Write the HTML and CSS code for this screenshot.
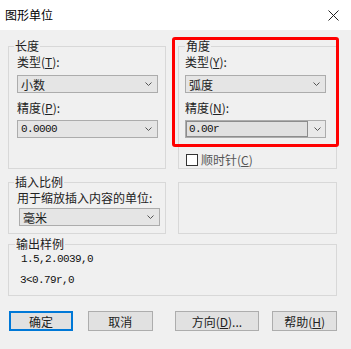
FILE: index.html
```html
<!DOCTYPE html>
<html lang="zh-CN">
<head>
    <meta charset="UTF-8">
    <title>图形单位</title>
    <link rel="stylesheet" href="styles.css">
</head>
<body>
    <div class="titlebar">
        <span class="title">图形单位</span>
        <svg class="close" width="11" height="11" viewBox="0 0 11 11">
            <path d="M0.5 0.5L10.5 10.5M10.5 0.5L0.5 10.5" stroke="#222" stroke-width="1" fill="none"/>
        </svg>
    </div>

    <div class="dialog">
        <div class="row row1">
            <fieldset class="group length">
                <legend>长度</legend>
                <div class="label">类型(<u>T</u>):</div>
                <div class="select"><span>小数</span><svg class="chev" width="7" height="4" viewBox="0 0 7 4"><polyline points="0.5,0.5 3.5,3.5 6.5,0.5" stroke="#555" fill="none"/></svg></div>
                <div class="label second">精度(<u>P</u>):</div>
                <div class="select"><span class="num">0.0000</span><svg class="chev" width="7" height="4" viewBox="0 0 7 4"><polyline points="0.5,0.5 3.5,3.5 6.5,0.5" stroke="#555" fill="none"/></svg></div>
            </fieldset>

            <fieldset class="group angle">
                <legend>角度</legend>
                <div class="label">类型(<u>Y</u>):</div>
                <div class="select"><span>弧度</span><svg class="chev" width="7" height="4" viewBox="0 0 7 4"><polyline points="0.5,0.5 3.5,3.5 6.5,0.5" stroke="#555" fill="none"/></svg></div>
                <div class="label second">精度(<u>N</u>):</div>
                <div class="select combo">
                    <span class="edit num">0.00r</span>
                    <span class="drop"><svg class="chev" width="7" height="4" viewBox="0 0 7 4"><polyline points="0.5,0.5 3.5,3.5 6.5,0.5" stroke="#555" fill="none"/></svg></span>
                </div>
                <div class="check"><span class="box"></span>顺时针(<u>C</u>)</div>
            </fieldset>
        </div>

        <div class="row row2">
            <fieldset class="group insert">
                <legend>插入比例</legend>
                <div class="label">用于缩放插入内容的单位:</div>
                <div class="select"><span>毫米</span><svg class="chev" width="7" height="4" viewBox="0 0 7 4"><polyline points="0.5,0.5 3.5,3.5 6.5,0.5" stroke="#555" fill="none"/></svg></div>
            </fieldset>
            <fieldset class="group empty"></fieldset>
        </div>

        <fieldset class="group output">
            <legend>输出样例</legend>
            <div class="sample num first">1.5,2.0039,0</div>
            <div class="sample num second">3&lt;0.79r,0</div>
        </fieldset>

        <div class="buttons">
            <button class="btn ok">确定</button>
            <button class="btn cancel">取消</button>
            <button class="btn dir">方向(<u>D</u>)...</button>
            <button class="btn help">帮助(<u>H</u>)</button>
        </div>

        <div class="highlight"></div>
    </div>
</body>
</html>
```

FILE: styles.css
```css
body {
    margin: 0;
    width: 351px;
    height: 349px;
    overflow: hidden;
    background: #f0f0f0;
    color: #222;
    font-family: "Noto Sans CJK SC", sans-serif;
    font-size: 12px;
}

.titlebar {
    height: 30px;
    background: #fff;
    display: flex;
    align-items: center;
    justify-content: space-between;
    padding: 0 12px 0 5px;
}

.title {
    color: #000;
    line-height: 14px;
}

.dialog {
    position: relative;
    padding: 9px 14px 0 8px;
}

.row {
    display: flex;
    gap: 12px;
}

.group {
    margin: 0;
    min-width: 0;
    box-sizing: border-box;
    border: 1px solid #d8d8d8;
    padding: 0 7px 0 8px;
}

.group legend {
    padding: 0 1px;
    margin-left: -3px;
    line-height: 14px;
}

.length {
    flex: 0 0 158px;
}

.angle {
    flex: 1;
    padding: 0 10px 1px 6px;
}

.angle legend {
    margin-left: 0;
}

.label {
    line-height: 14px;
    margin-top: 2px;
}

.label.second {
    margin-top: 8px;
}

.select {
    height: 18px;
    box-sizing: border-box;
    margin-top: 6px;
    border: 1px solid #acacac;
    background: #e5e5e5;
    display: flex;
    align-items: center;
    justify-content: space-between;
    padding: 0 5px 0 3px;
}

.label.second + .select {
    margin-top: 5px;
}

.chev {
    display: block;
}

.num {
    font-family: "Liberation Mono", monospace;
    font-size: 11px;
    letter-spacing: -0.6px;
    color: #111;
}

.select.combo {
    padding: 0;
    background: #e9e9e9;
}

.combo .edit {
    height: 100%;
    width: 122px;
    box-sizing: border-box;
    border: 1px solid #8c8c8c;
    background: #e0e0e0;
    padding-left: 2px;
    line-height: 14px;
}

.combo .drop {
    flex: 1;
    display: flex;
    justify-content: center;
    padding-left: 1px;
}

.check {
    display: flex;
    align-items: center;
    height: 15px;
    margin-top: 14px;
    color: #555;
}

.check .box {
    width: 12px;
    height: 12px;
    box-sizing: border-box;
    border: 1px solid #333;
    background: #fff;
    margin: 0 3px 0 1px;
}

.row2 {
    margin-top: 6px;
}

.insert {
    flex: 0 0 158px;
    padding: 0 5px 7px 10px;
}

.insert legend {
    margin-left: -5px;
}

.insert .label {
    margin: 2px 0 0 -2px;
}

.insert .select {
    margin-top: 3px;
}

.empty {
    flex: 1;
    margin-top: 7px;
}

.output {
    margin-top: 3px;
    padding: 0 10px 8px 11px;
}

.output legend {
    margin-left: -5px;
}

.sample {
    line-height: 14px;
}

.sample.first {
    margin-top: 1px;
    padding-left: 1px;
}

.sample.second {
    margin-top: 7px;
}

.buttons {
    display: flex;
    margin-top: 15px;
    padding-left: 1px;
}

.btn {
    height: 20px;
    box-sizing: border-box;
    border: 1px solid #adadad;
    background: #e1e1e1;
    color: #222;
    font-family: inherit;
    font-size: 12px;
    padding: 0;
    display: flex;
    align-items: center;
    justify-content: center;
}

.ok {
    width: 64px;
    border: 2px solid #0078d7;
}

.cancel {
    width: 65px;
    margin-left: 15px;
}

.dir {
    width: 85px;
    margin-left: 22px;
}

.help {
    width: 65px;
    margin-left: 13px;
}

/* red frame drawn over the angle settings */
.highlight {
    position: absolute;
    left: 172px;
    top: 7px;
    width: 167px;
    height: 110px;
    box-sizing: border-box;
    border: 3px solid #ff0000;
    border-radius: 3px;
}
```
